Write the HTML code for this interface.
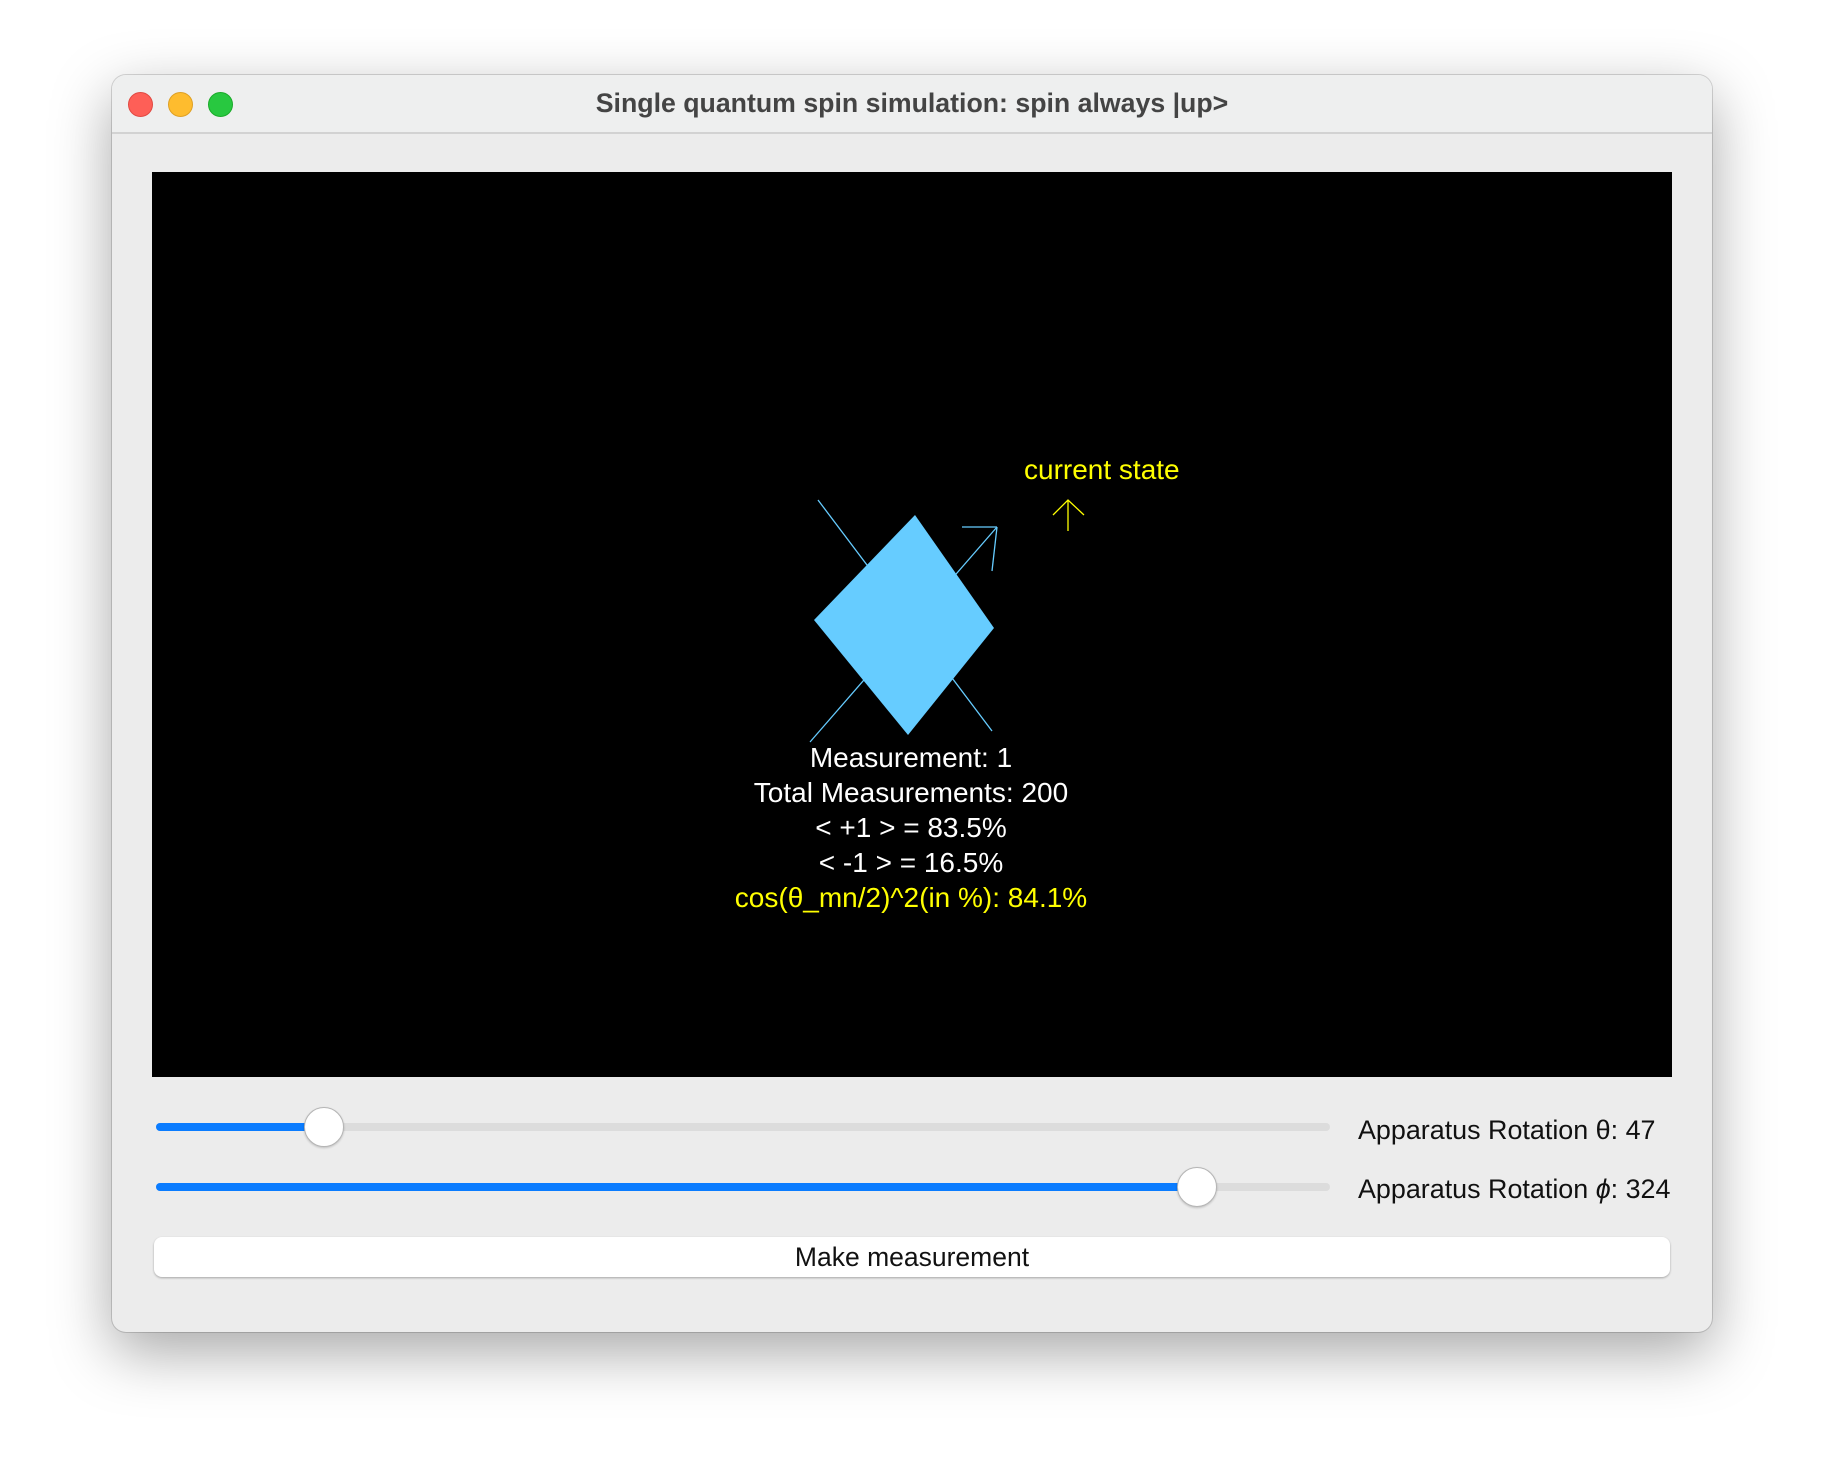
<!DOCTYPE html>
<html><head><meta charset="utf-8"><style>
html,body{margin:0;padding:0;width:1824px;height:1480px;background:#fff;overflow:hidden;font-family:"Liberation Sans",sans-serif}
.win{position:absolute;left:112px;top:75px;width:1600px;height:1257px;background:#ececec;border-radius:14px;box-shadow:0 20px 60px rgba(0,0,0,.35),0 0 0 1px rgba(0,0,0,.15)}
.tb{position:absolute;left:0;top:0;width:1600px;height:57px;background:#eeefef;border-radius:14px 14px 0 0;border-bottom:2px solid #d2d2d2}
.tl{position:absolute;top:17px;width:23px;height:23px;border-radius:50%}
.title{position:absolute;left:0;width:1600px;top:13px;text-align:center;font-weight:bold;font-size:26.7px;color:#444}
.canvas{position:absolute;left:40px;top:97px;width:1520px;height:905px;background:#000}
.track{position:absolute;height:8px;border-radius:4px;background:#dcdcdc}
.fill{position:absolute;height:8px;border-radius:4px;background:#0a7cff}
.thumb{position:absolute;width:38px;height:38px;border-radius:50%;background:#fff;border:1px solid #b5b5b5;box-shadow:0 1px 2px rgba(0,0,0,.2)}
.lbl{position:absolute;font-size:26.9px;color:#111}
.btn{position:absolute;left:42px;top:1162px;width:1516px;height:40px;background:#fff;border-radius:8px;box-shadow:0 1px 2px rgba(0,0,0,.3);text-align:center;line-height:40px;font-size:26.5px;color:#111}
</style></head><body>
<div class="win">
<div class="tb">
<div class="tl" style="left:16px;background:#fe5f57;border:1px solid #e14942;"></div>
<div class="tl" style="left:56px;background:#febc2e;border:1px solid #dfa023;"></div>
<div class="tl" style="left:96px;background:#28c840;border:1px solid #1aab29;"></div>
<div class="title">Single quantum spin simulation: spin always |up&gt;</div>
</div>
<div class="canvas">
<svg width="1520" height="905" style="position:absolute;left:0;top:0">
<g transform="translate(-152,-172)">
<line x1="818" y1="500" x2="992" y2="731" stroke="#66ccff" stroke-width="1.3"/>
<line x1="810" y1="742" x2="997" y2="527" stroke="#66ccff" stroke-width="1.3"/>
<line x1="997" y1="527" x2="962" y2="527" stroke="#66ccff" stroke-width="1.3"/>
<line x1="997" y1="527" x2="992" y2="571" stroke="#66ccff" stroke-width="1.3"/>
<polygon points="915,515 994,628 908,735 814,620" fill="#66ccff"/>
<line x1="1068" y1="500" x2="1068" y2="531" stroke="#ffff00" stroke-width="1.3"/>
<polyline points="1053,515 1068,500 1084,515" fill="none" stroke="#ffff00" stroke-width="1.3"/>
<text x="1024" y="479" fill="#ffff00" font-size="28" font-family="Liberation Sans, sans-serif">current state</text>
<g font-size="28" font-family="Liberation Sans, sans-serif" text-anchor="middle" fill="#fff">
<text x="911" y="767">Measurement: 1</text>
<text x="911" y="802">Total Measurements: 200</text>
<text x="911" y="837">&lt; +1 &gt; = 83.5%</text>
<text x="911" y="872">&lt; -1 &gt; = 16.5%</text>
<text x="911" y="907" fill="#ffff00">cos(θ_mn/2)^2(in %): 84.1%</text>
</g>
</g>
</svg>
</div>
<div class="track" style="left:44px;top:1048px;width:1174px"></div>
<div class="fill" style="left:44px;top:1048px;width:168px"></div>
<div class="thumb" style="left:192px;top:1032px"></div>
<div class="lbl" style="left:1246px;top:1040px">Apparatus Rotation θ: 47</div>
<div class="track" style="left:44px;top:1108px;width:1174px"></div>
<div class="fill" style="left:44px;top:1108px;width:1042px"></div>
<div class="thumb" style="left:1065px;top:1092px"></div>
<div class="lbl" style="left:1246px;top:1099px">Apparatus Rotation <i>ϕ</i>: 324</div>
<div class="btn">Make measurement</div>
</div>
</body></html>
